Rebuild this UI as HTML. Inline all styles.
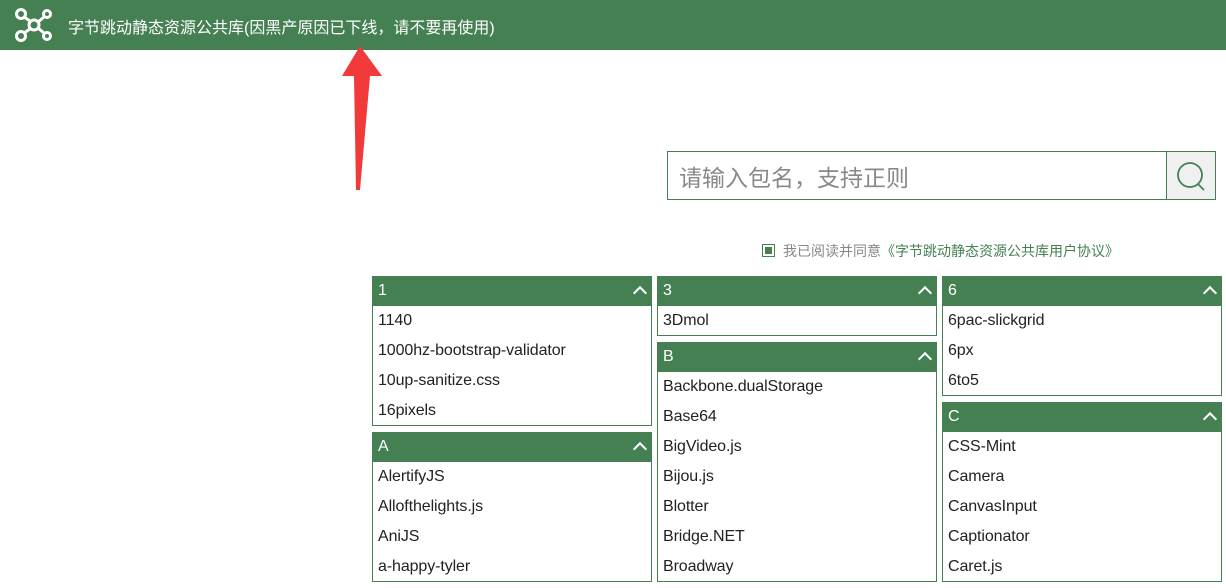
<!DOCTYPE html>
<html><head><meta charset="utf-8"><style>
*{margin:0;padding:0;box-sizing:border-box}
body{width:1226px;height:570px;overflow:hidden;background:#fff;font-family:"Liberation Sans","Noto Sans CJK SC",sans-serif;position:relative}
.top{position:absolute;left:0;top:0;width:1226px;height:50px;background:#448052;color:#fff;font-size:16px}
.top span{position:absolute;left:68px;top:14px}
.search{position:absolute;left:667px;top:151px;width:549px;height:49px;border:1px solid #448052}
.search .ph{position:absolute;left:11px;top:7px;font-size:23px;color:#888}
.search .btn{position:absolute;right:0;top:0;width:49px;height:47px;background:#f0f0f0;border-left:1px solid #448052}
.agree{position:absolute;left:762px;top:241px;font-size:14px;color:#888}
.agree i{display:inline-block;width:13px;height:13px;border:1px solid #448052;padding:2px;vertical-align:-1px;margin-right:8px}
.agree i b{display:block;width:7px;height:7px;background:#448052}
.agree em{font-style:normal;color:#448052}
.col{position:absolute;width:280px}
.box{border:1px solid #448052;border-top:0;margin-bottom:6px}
.h{height:30px;margin:0 -1px;background:#448052;color:#fff;font-size:16px;line-height:30px;padding-left:6px;position:relative}
.h:after{content:"";position:absolute;right:7px;top:12px;width:8px;height:8px;border-left:2px solid #fff;border-top:2px solid #fff;transform:rotate(45deg)}
.it{height:30px;line-height:30px;padding-left:5px;font-size:16px;color:#222;letter-spacing:-0.1px}
.box .it:last-child{height:29px}
</style></head><body>
<div class="top">
<svg style="position:absolute;left:14px;top:7px" width="40" height="36" viewBox="0 0 40 36" fill="none" stroke="#fff" stroke-width="3"><circle cx="7" cy="7" r="4.5"/><circle cx="7" cy="29" r="4.5"/><circle cx="20" cy="18" r="5"/><circle cx="33" cy="7" r="3.5"/><circle cx="33" cy="29" r="3.5"/><path d="M10 10l6 4M10 26l6-4M24 15l6-5M24 21l6 5"/></svg>
<span>字节跳动静态资源公共库(因黑产原因已下线，请不要再使用)</span></div>
<svg style="position:absolute;left:340px;top:44px" width="44" height="150" viewBox="0 0 44 150"><path d="M20 2L2 32h12L16 146h4L30 32h12z" fill="#f23a3a"/></svg>
<div class="search"><div class="ph">请输入包名，支持正则</div><div class="btn"><svg width="48" height="47" viewBox="0 0 48 47" fill="none" stroke="#448052" stroke-width="1.8"><circle cx="23" cy="23" r="12"/><path d="M31 32l6 6"/></svg></div></div>
<div class="agree"><i><b></b></i>我已阅读并同意<em>《字节跳动静态资源公共库用户协议》</em></div>
<div class="col" style="left:372px;top:276px">
<div class="box"><div class="h">1</div><div class="it">1140</div><div class="it">1000hz-bootstrap-validator</div><div class="it">10up-sanitize.css</div><div class="it">16pixels</div></div>
<div class="box"><div class="h">A</div><div class="it">AlertifyJS</div><div class="it">Allofthelights.js</div><div class="it">AniJS</div><div class="it">a-happy-tyler</div></div></div>
<div class="col" style="left:657px;top:276px">
<div class="box"><div class="h">3</div><div class="it">3Dmol</div></div>
<div class="box"><div class="h">B</div><div class="it">Backbone.dualStorage</div><div class="it">Base64</div><div class="it">BigVideo.js</div><div class="it">Bijou.js</div><div class="it">Blotter</div><div class="it">Bridge.NET</div><div class="it">Broadway</div></div></div>
<div class="col" style="left:942px;top:276px">
<div class="box"><div class="h">6</div><div class="it">6pac-slickgrid</div><div class="it">6px</div><div class="it">6to5</div></div>
<div class="box"><div class="h">C</div><div class="it">CSS-Mint</div><div class="it">Camera</div><div class="it">CanvasInput</div><div class="it">Captionator</div><div class="it">Caret.js</div></div></div>
</body></html>
